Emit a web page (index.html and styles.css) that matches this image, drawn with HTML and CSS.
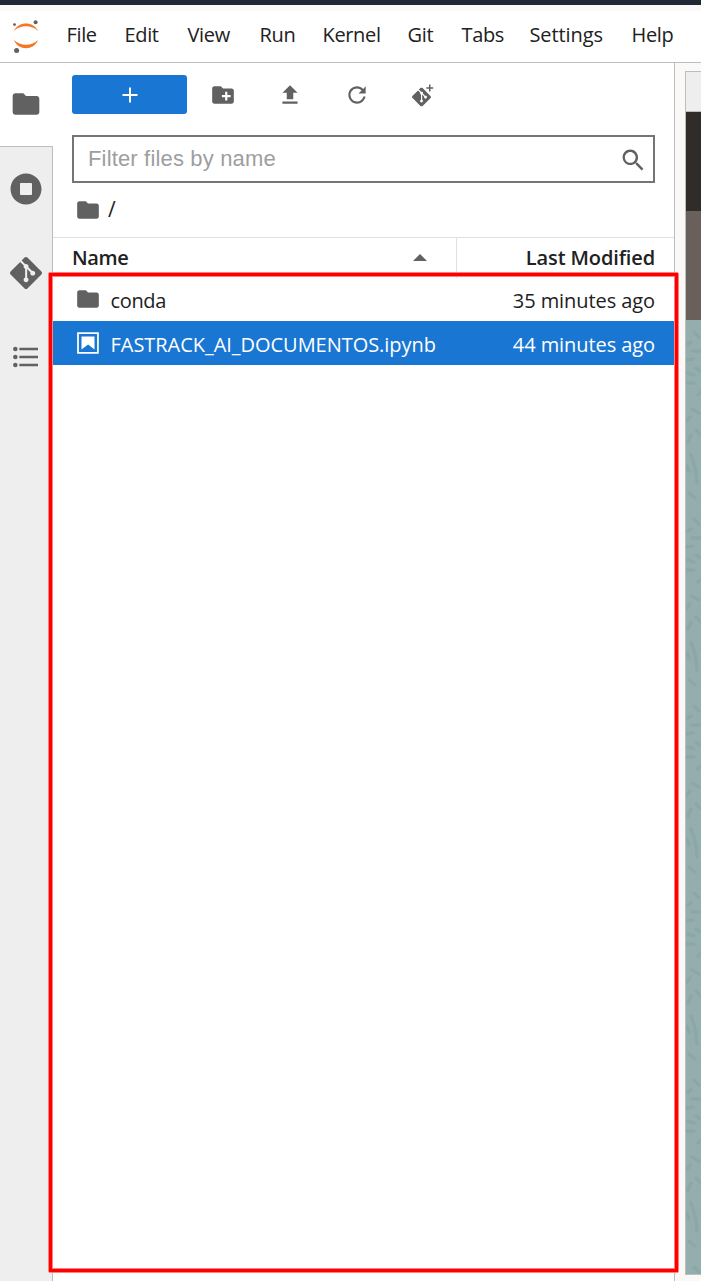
FILE: index.html
```html
<!DOCTYPE html>
<html lang="en">
<head>
<meta charset="utf-8">
<title>JupyterLab</title>
<link rel="stylesheet" href="styles.css">
</head>
<body>
<svg class="defs" width="0" height="0" aria-hidden="true">
  <symbol id="folder" viewBox="0 0 24 24"><path d="M10 4H4c-1.1 0-1.99.9-1.99 2L2 18c0 1.1.9 2 2 2h16c1.1 0 2-.9 2-2V8c0-1.1-.9-2-2-2h-8l-2-2z"/></symbol>
  <symbol id="git" viewBox="0 0 24 24"><path d="M23.546 10.93L13.067.452c-.604-.603-1.582-.603-2.188 0L8.708 2.627l2.76 2.76c.645-.215 1.379-.07 1.889.441.516.515.658 1.258.438 1.9l2.658 2.66c.645-.223 1.387-.078 1.9.435.721.72.721 1.884 0 2.604-.719.719-1.881.719-2.6 0-.539-.541-.674-1.337-.404-1.996L12.86 8.955v6.525c.176.086.342.203.488.348.713.721.713 1.883 0 2.6-.719.721-1.889.721-2.609 0-.719-.719-.719-1.879 0-2.598.182-.18.387-.316.605-.406V8.835c-.217-.091-.424-.222-.6-.401-.545-.545-.676-1.342-.396-2.009L7.636 3.7.45 10.881c-.6.605-.6 1.584 0 2.189l10.48 10.477c.604.604 1.582.604 2.186 0l10.43-10.43c.605-.603.605-1.582 0-2.187"/></symbol>
</svg>
<div class="app">
  <header class="topbar">
    <svg class="logo" viewBox="0 0 28 36">
      <path fill="#f37726" d="M2 13C6 3 22 3 26 13C20 6.800 8 6.800 2 13zM2 22C6 33 22 33 26 22C20 28.400 8 28.400 2 22z"/>
      <g fill="#616161"><circle cx="23.600" cy="4.200" r="2"/><circle cx="2.500" cy="6.600" r="1.400"/><circle cx="4.600" cy="32.500" r="2.500"/></g>
    </svg>
    <nav class="menu">
      <span>File</span><span>Edit</span><span>View</span><span>Run</span><span>Kernel</span><span>Git</span><span>Tabs</span><span class="settings">Settings</span><span>Help</span>
    </nav>
  </header>
  <div class="body">
    <aside class="rail">
      <div class="tab active"><svg class="icon large"><use href="#folder"/></svg></div>
      <div class="tab"><svg class="icon large" viewBox="0 0 512 512"><path d="M256 8C119 8 8 119 8 256s111 248 248 248 248-111 248-248S393 8 256 8zm96 328c0 8.800-7.200 16-16 16H176c-8.800 0-16-7.200-16-16V176c0-8.800 7.200-16 16-16h160c8.800 0 16 7.200 16 16v160z"/></svg></div>
      <div class="tab"><svg class="icon large"><use href="#git"/></svg></div>
      <div class="tab"><svg class="icon large" viewBox="0 0 24 24"><path d="M7 5h14v2H7zM7 11h14v2H7zM7 17h14v2H7z"/><circle cx="4" cy="6" r="1.700"/><circle cx="4" cy="12" r="1.700"/><circle cx="4" cy="18" r="1.700"/></svg></div>
    </aside>
    <main class="browser">
      <div class="toolbar">
        <button class="new" aria-label="New launcher"><svg class="plus" viewBox="0 0 16 16"><path d="M8 .5v15M.5 8h15" stroke="#fff" stroke-width="2"/></svg></button>
        <div class="tool"><svg class="icon" viewBox="0 0 24 24"><path d="M20 6h-8l-2-2H4c-1.110 0-1.990.89-1.990 2L2 18c0 1.110.89 2 2 2h16c1.110 0 2-.89 2-2V8c0-1.110-.89-2-2-2zm-1 8h-3v3h-2v-3h-3v-2h3V9h2v3h3v2z"/></svg></div>
        <div class="tool"><svg class="icon" viewBox="0 0 24 24"><path d="M5 20h14v-2H5v2zM5 10h4v6h6v-6h4l-7-7-7 7z"/></svg></div>
        <div class="tool"><svg class="icon" viewBox="0 0 18 18"><path d="M9 13.500c-2.490 0-4.500-2.010-4.500-4.500S6.510 4.500 9 4.500c1.240 0 2.360.52 3.170 1.330L10 8h5V3l-1.760 1.760C12.150 3.680 10.660 3 9 3 5.690 3 3.010 5.690 3.010 9S5.690 15 9 15c2.970 0 5.430-2.160 5.900-5h-1.520c-.46 2-2.240 3.500-4.380 3.500z"/></svg></div>
        <div class="tool"><svg class="icon" viewBox="0 0 26 26"><use href="#git" x="2" y="5.500" width="19" height="19"/><path d="M19 2.500h1.500v2.700h2.700v1.500h-2.700v2.700H19V6.700h-2.700V5.200H19z"/></svg></div>
      </div>
      <div class="filter">
        <span>Filter files by name</span>
        <svg class="icon" viewBox="0 0 18 18"><path d="M12.100 10.900h-.7l-.2-.2c.8-.9 1.300-2.200 1.300-3.500 0-3-2.400-5.400-5.400-5.400S1.800 4.200 1.800 7.100s2.400 5.400 5.400 5.400c1.300 0 2.500-.5 3.500-1.300l.2.2v.7l4.100 4.100 1.200-1.200-4.200-4.300zm-5 0c-2.100 0-3.700-1.700-3.700-3.700s1.700-3.700 3.700-3.700 3.700 1.700 3.700 3.700-1.600 3.700-3.700 3.700z"/></svg>
      </div>
      <div class="crumbs"><svg class="icon"><use href="#folder"/></svg><span class="slash">/</span></div>
      <div class="heading">
        <div class="col-name"><span class="name-label">Name</span><svg class="caret" viewBox="0 0 14 7"><path d="M0 7l7-7 7 7z"/></svg></div>
        <div class="col-date"><span class="date-label">Last Modified</span></div>
      </div>
      <div class="row first"><svg class="icon"><use href="#folder"/></svg><span class="file">conda</span><span class="date">35 minutes ago</span></div>
      <div class="row selected"><svg class="icon" viewBox="0 0 22 22"><path d="M18.700 3.300v15.400H3.300V3.300h15.400m1.500-1.500H1.800v18.300h18.300l.1-18.300z"/><path d="M16.500 16.500l-5.400-4.300-5.600 4.300v-11h11z"/></svg><span class="file notebook">FASTRACK_AI_DOCUMENTOS.ipynb</span><span class="date">44 minutes ago</span></div>
    </main>
    <section class="dock">
      <div class="tabstrip"></div>
      <div class="dark"></div>
      <div class="brown"></div>
      <svg class="teal">
        <defs><pattern id="leaves" width="30" height="187" patternUnits="userSpaceOnUse">
          <g fill="none" stroke="#8ba8a6" stroke-width="3.500" stroke-linecap="round">
            <path d="M8 12l5 5M2 24l3-2M6 31h8M0 40l7-1M10 48l4 3M2 53l6 2M1 63h7M12 75l3-3M6 89l7 4M1 101l3-4M10 110l5 5M2 122l3-7M5 135q5 12 6 28M1 146l2 5M3 173l6 5"/>
          </g>
        </pattern></defs>
        <rect width="100%" height="100%" fill="#93aead"/><rect width="100%" height="100%" fill="url(#leaves)"/>
      </svg>
    </section>
  </div>
  <div class="highlight"></div>
</div>
</body>
</html>
```
FILE: styles.css
```css
* { box-sizing: border-box; }
body { margin: 0; background: #faf9f8; color: #212121; font-family: "Open Sans", "Noto Sans", sans-serif; font-size: 20px; letter-spacing: -.35px; }
.defs { position: absolute; }
.app { position: relative; height: 1281px; overflow: hidden; display: flex; flex-direction: column; }
.topbar { height: 63px; flex: none; display: flex; align-items: flex-start; background: linear-gradient(#1e2733 0 5px, #faf9f8 5px 11px, #fff 11px); border-bottom: 1px solid #bdbdbd; }
.logo { width: 28px; height: 36px; margin: 18px 0 0 12px; }
.menu { display: grid; grid-template-columns: 58px 63px 72px 63px 85px 54px 68px 102px 50px; margin: 21px 0 0 26.5px; line-height: 28px; white-space: nowrap; }
.settings { letter-spacing: -.1px; }
.body { flex: 1; display: flex; min-height: 0; }
.rail { width: 53px; flex: none; background: #eee; border-right: 1px solid #bdbdbd; }
.tab { height: 84px; display: flex; align-items: center; padding-left: 9.5px; }
.tab.active { width: 53px; padding-bottom: 2px; background: #fff; border-bottom: 1px solid #bdbdbd; }
.icon { width: 26px; height: 26px; fill: #616161; flex: none; display: block; }
.large { width: 32px; height: 32px; }
.browser { width: 622px; flex: none; background: #fff; border-right: 1px solid #bdbdbd; }
.toolbar { display: flex; align-items: center; height: 39px; margin: 12px 0 0 19px; }
.new { width: 115px; height: 39px; border: 0; border-radius: 3px; background: #1976d2; display: flex; align-items: center; justify-content: center; padding: 0; margin-right: 2px; }
.plus { width: 16px; height: 16px; }
.tool { width: 67px; display: flex; justify-content: center; }
.tool:last-child { width: 65px; }
.filter { height: 48px; margin: 21px 19px 0; padding: 0 7px 0 14px; border: 2px solid #757575; display: flex; align-items: center; justify-content: space-between; color: #9e9e9e; font: 22px "Liberation Sans", Arial, sans-serif; letter-spacing: .16px; }
.filter .icon { margin-top: 1px; }
.crumbs { height: 54px; display: flex; align-items: center; padding-left: 22px; gap: 7px; }
.slash { padding-bottom: 2px; font-size: 21px; }
.heading { height: 41px; border-top: 1px solid #e0e0e0; display: flex; font-weight: 600; }
.col-name { width: 404px; border-right: 1px solid #e0e0e0; padding: 0 29px 2px 19px; display: flex; align-items: center; justify-content: space-between; }
.caret { width: 14px; height: 7px; fill: #616161; }
.col-date { flex: 1; text-align: right; padding-right: 19px; line-height: 39px; letter-spacing: -.12px; }
.row { height: 44px; display: flex; align-items: center; padding: 2px 19px 0 22px; }
.row.first { height: 43px; }
.row .icon { margin-top: -3px; }
.file { margin-left: 9.5px; flex: 1; white-space: nowrap; }
.notebook { letter-spacing: -.04px; }
.date { letter-spacing: -.08px; }
.selected { background: #1976d2; color: #fff; }
.selected .icon { fill: #fff; }
.dock { width: 16px; flex: none; height: 1204px; margin: 8px 0 0 10px; border: 1px solid #bdbdbd; border-right: 0; display: flex; flex-direction: column; }
.tabstrip { height: 40px; flex: none; background: #eee; border-bottom: 1px solid #bdbdbd; }
.dark { height: 99px; flex: none; background: #302c29; }
.brown { height: 109px; flex: none; background: #69605b; }
.teal { width: 15px; flex: 1; min-height: 0; }
.highlight { position: absolute; left: 48px; top: 272px; width: 631px; height: 1001px; border: 5px solid #ff8080; border-radius: 2px; }
.highlight::after { content: ""; position: absolute; inset: -4px; border: 3px solid #f00; }
```
